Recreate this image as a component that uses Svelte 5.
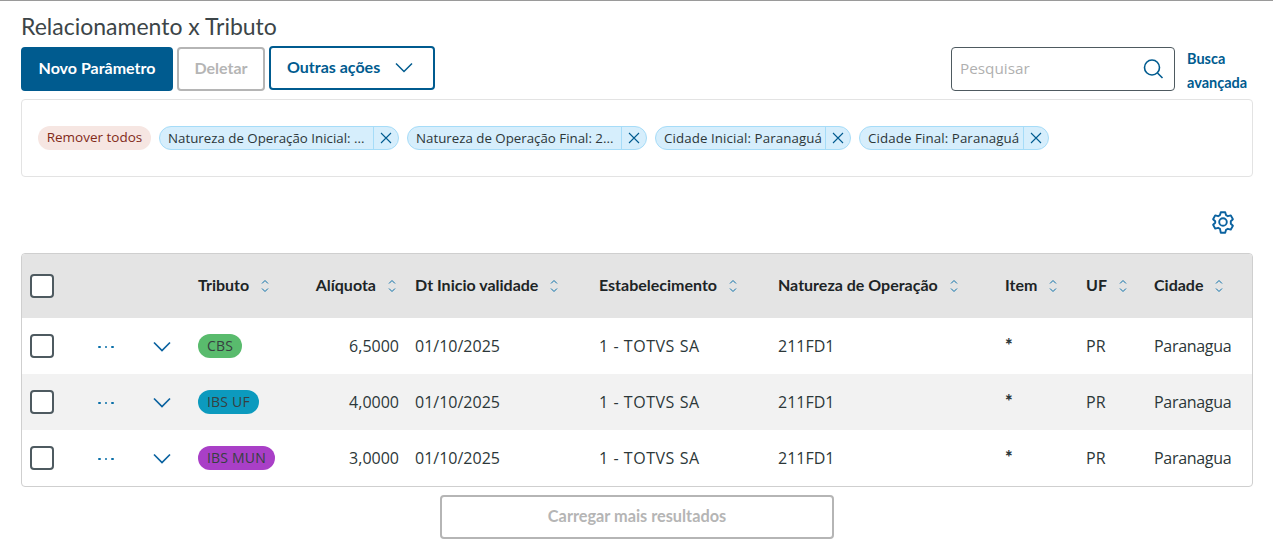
<script>
  const chips = [
    { label: 'Natureza de Operação Inicial: ...', w: 240, cls: '' },
    { label: 'Natureza de Operação Final: 2...', w: 240, cls: '' },
    { label: 'Cidade Inicial: Paranaguá', w: 196, cls: 'wide' },
    { label: 'Cidade Final: Paranaguá', w: 190, cls: 'wide' }
  ];
  const cols = [
    { label: 'Tributo', cls: '' },
    { label: 'Alíquota', cls: 'num' },
    { label: 'Dt Inicio validade', cls: '' },
    { label: 'Estabelecimento', cls: '' },
    { label: 'Natureza de Operação', cls: '' },
    { label: 'Item', cls: '' },
    { label: 'UF', cls: '' },
    { label: 'Cidade', cls: '' }
  ];
  const rows = [
    { tag: 'CBS', color: 'green', rate: '6,5000' },
    { tag: 'IBS UF', color: 'blue', rate: '4,0000' },
    { tag: 'IBS MUN', color: 'purple', rate: '3,0000' }
  ];
</script>

<div class="page">
  <h1>Relacionamento x Tributo</h1>

  <div class="toolbar">
    <div class="actions">
      <button class="btn primary">Novo Parâmetro</button>
      <button class="btn disabled">Deletar</button>
      <button class="btn outline">
        Outras ações
        <svg width="20" height="20" viewBox="0 0 20 20" fill="none" stroke="#005b8f" stroke-width="1.5"><path d="M2 6.5l8 8 8-8" /></svg>
      </button>
    </div>
    <div class="search-area">
      <div class="search">
        <span class="placeholder">Pesquisar</span>
        <svg width="24" height="24" viewBox="0 0 24 24" fill="none" stroke="#005b8f" stroke-width="1.6"><circle cx="11" cy="10.5" r="7.5" /><path d="M16.5 16l5 5" /></svg>
      </div>
      <a class="advanced" href="#top">Busca avançada</a>
    </div>
  </div>

  <div class="filters">
    <span class="remove-all">Remover todos</span>
    {#each chips as chip}
      <span class="chip {chip.cls}" style="width:{chip.w}px">
        <span class="chip-text">{chip.label}</span>
        <span class="chip-close">
          <svg width="12" height="12" viewBox="0 0 12 12" fill="none" stroke="#005b8f" stroke-width="1.1"><path d="M1 1l10 10M11 1L1 11" /></svg>
        </span>
      </span>
    {/each}
  </div>

  <div class="settings">
    <svg width="24" height="24" viewBox="0 0 24 24" fill="none" stroke="#0a62a0" stroke-width="1.9" stroke-linejoin="round"><circle cx="12" cy="12" r="3.8" /><path d="M9.8 2.2h4.4l.8 2.9 1.9 1.1 2.9-.8 2.1 3.8-2.1 2v2.6l2.1 2-2.1 3.8-2.9-.8-1.9 1.1-.8 2.9H9.8L9 18.9l-1.9-1.1-2.9.8-2.1-3.8 2.1-2v-1.6l-2.1-2 2.1-3.8 2.9.8L9 5.1z" /></svg>
  </div>

  <div class="table-wrap">
    <table>
      <colgroup>
        <col style="width:67px" /><col style="width:56px" /><col style="width:45px" /><col style="width:117px" /><col style="width:100px" /><col style="width:184px" /><col style="width:179px" /><col style="width:227px" /><col style="width:81px" /><col style="width:68px" /><col />
      </colgroup>
      <thead>
        <tr>
          <th class="check"><span class="box"></span></th>
          <th></th>
          <th></th>
          {#each cols as col}
            <th class={col.cls}>
              <span class="th-in">
                <span class="th-label">{col.label}</span>
                <svg class="sort" width="10" height="16" viewBox="0 0 10 16" fill="none" stroke="#0a6fa8" stroke-width="1"><path d="M2 5.5L5 2.5l3 3M2 10.5l3 3 3-3" /></svg>
              </span>
            </th>
          {/each}
        </tr>
      </thead>
      <tbody>
        {#each rows as row}
          <tr>
            <td class="check"><span class="box"></span></td>
            <td class="dots"><span></span><span></span><span></span></td>
            <td class="expand">
              <svg width="20" height="12" viewBox="0 0 20 12" fill="none" stroke="#0a62a0" stroke-width="1.7"><path d="M2 2.5l8 8 8-8" /></svg>
            </td>
            <td><span class="tag {row.color}">{row.tag}</span></td>
            <td class="num">{row.rate}</td>
            <td>01/10/2025</td>
            <td class="company">1 - TOTVS SA</td>
            <td>211FD1</td>
            <td class="star">*</td>
            <td>PR</td>
            <td class="city">Paranagua</td>
          </tr>
        {/each}
      </tbody>
    </table>
  </div>

  <div class="more">
    <button class="btn disabled load">Carregar mais resultados</button>
  </div>
</div>

<style>
  :global(body) {
    margin: 0;
    background: #fff;
  }
  .page {
    border-top: 1px solid #9a9a9a;
    padding: 0 20px 0 21px;
    height: 550px;
    overflow: hidden;
    box-sizing: border-box;
    font-family: "Lato", "Open Sans", sans-serif;
    color: #2c3739;
    font-size: 16px;
  }
  h1 {
    margin: 0;
    padding-top: 9px;
    height: 46px;
    box-sizing: border-box;
    font-size: 23px;
    line-height: 32px;
    font-weight: 400;
    color: #3c4548;
  }
  .toolbar {
    display: flex;
    justify-content: space-between;
    height: 52px;
  }
  .actions {
    display: flex;
    gap: 4px;
    align-items: flex-start;
  }
  .btn {
    box-sizing: border-box;
    height: 44px;
    border-radius: 4px;
    font-family: inherit;
    font-size: 16px;
    font-weight: 700;
    padding: 0 0 3px;
    background: #fff;
  }
  .primary {
    width: 152px;
    background: #005b8f;
    border: 2px solid #005b8f;
    color: #fff;
  }
  .disabled {
    width: 88px;
    border: 2px solid #b5b5b5;
    color: #b5b5b5;
  }
  .outline {
    width: 166px;
    border: 2px solid #005b8f;
    color: #005b8f;
    display: flex;
    align-items: center;
    gap: 14px;
    padding-left: 16px;
    margin-top: -1px;
  }
  .search-area {
    display: flex;
    gap: 12px;
  }
  .search {
    box-sizing: border-box;
    width: 224px;
    height: 44px;
    border: 1px solid #4e5a60;
    border-radius: 4px;
    display: flex;
    align-items: center;
    justify-content: space-between;
    padding: 0 9px 0 8px;
  }
  .placeholder {
    color: #b0b0b0;
    font-family: "Open Sans", sans-serif;
    font-size: 15.3px;
    padding-bottom: 2px;
  }
  .advanced {
    width: 66px;
    font-size: 14.5px;
    line-height: 24px;
    font-weight: 700;
    color: #005b8f;
    text-decoration: none;
  }
  .filters {
    box-sizing: border-box;
    height: 78px;
    border: 1px solid #e3e3e3;
    border-radius: 4px;
    display: flex;
    align-items: center;
    gap: 8px;
    padding: 0 16px;
    font-family: "Open Sans", sans-serif;
  }
  .remove-all {
    box-sizing: border-box;
    width: 113px;
    height: 24px;
    border-radius: 12px;
    background: #f6e6e2;
    color: #822a19;
    font-size: 13.5px;
    line-height: 22px;
    text-align: center;
  }
  .chip {
    box-sizing: border-box;
    height: 24px;
    border: 1px solid #a6dcf8;
    background: #d6eefc;
    border-radius: 12px;
    display: flex;
    align-items: center;
    font-size: 13.3px;
    color: #2c3739;
  }
  .chip.wide .chip-text {
    letter-spacing: 0.1px;
  }
  .chip-text {
    flex: 1;
    padding: 0 0 1px 8px;
    white-space: nowrap;
    overflow: hidden;
  }
  .chip-close {
    box-sizing: border-box;
    width: 25px;
    height: 22px;
    border-left: 1px solid #a6dcf8;
    display: flex;
    align-items: center;
    justify-content: center;
  }
  .settings {
    height: 76px;
    display: flex;
    justify-content: flex-end;
    align-items: flex-start;
    padding: 33px 18px 0 0;
    box-sizing: border-box;
  }
  .table-wrap {
    box-sizing: border-box;
    height: 234px;
    border: 1px solid #cfcfcf;
    border-radius: 4px;
    overflow: hidden;
  }
  table {
    width: 100%;
    border-collapse: collapse;
    table-layout: fixed;
  }
  thead tr {
    height: 64px;
    background: #e4e4e4;
  }
  tbody tr {
    height: 56px;
  }
  tbody tr:nth-child(even) {
    background: #f2f2f2;
  }
  th, td {
    padding: 0 8px;
    text-align: left;
    white-space: nowrap;
  }
  td {
    font-family: "Open Sans", sans-serif;
    font-size: 16px;
  }
  .company {
    letter-spacing: 0.55px;
  }
  .city {
    letter-spacing: -0.3px;
  }
  th {
    font-weight: 700;
    color: #1d2426;
  }
  .th-in {
    display: inline-flex;
    align-items: center;
    gap: 11px;
    padding-bottom: 1px;
  }
  .th-label {
    padding-bottom: 2px;
  }
  th.num {
    padding-right: 10px;
  }
  .num {
    text-align: right;
  }
  .box {
    display: block;
    box-sizing: border-box;
    width: 24px;
    height: 24px;
    border: 2px solid #4e5a60;
    border-radius: 4px;
    background: #fff;
  }
  .dots {
    padding-left: 9px;
  }
  .dots span {
    display: inline-block;
    width: 2.5px;
    height: 2.5px;
    border-radius: 50%;
    background: #0a6fa8;
    margin-right: 4.2px;
    vertical-align: 4px;
  }
  .expand {
    padding-left: 7px;
  }
  .expand svg {
    display: block;
  }
  .tag {
    display: flex;
    align-items: center;
    box-sizing: border-box;
    width: fit-content;
    height: 24px;
    padding: 0 9px 1px;
    border-radius: 12px;
    font-size: 14px;
    letter-spacing: 0.2px;
    color: #373f41;
  }
  .green { background: #59bb6d; }
  .blue { background: #0c9abe; }
  .purple { background: #a93fc7; }
  .star {
    font-family: "Lato", sans-serif;
    font-weight: 900;
    font-size: 18px;
    padding-bottom: 2px;
  }
  .more {
    display: flex;
    justify-content: center;
    padding: 8px 0 0 0;
  }
  .load {
    width: 394px;
    font-size: 16.3px;
  }
</style>
